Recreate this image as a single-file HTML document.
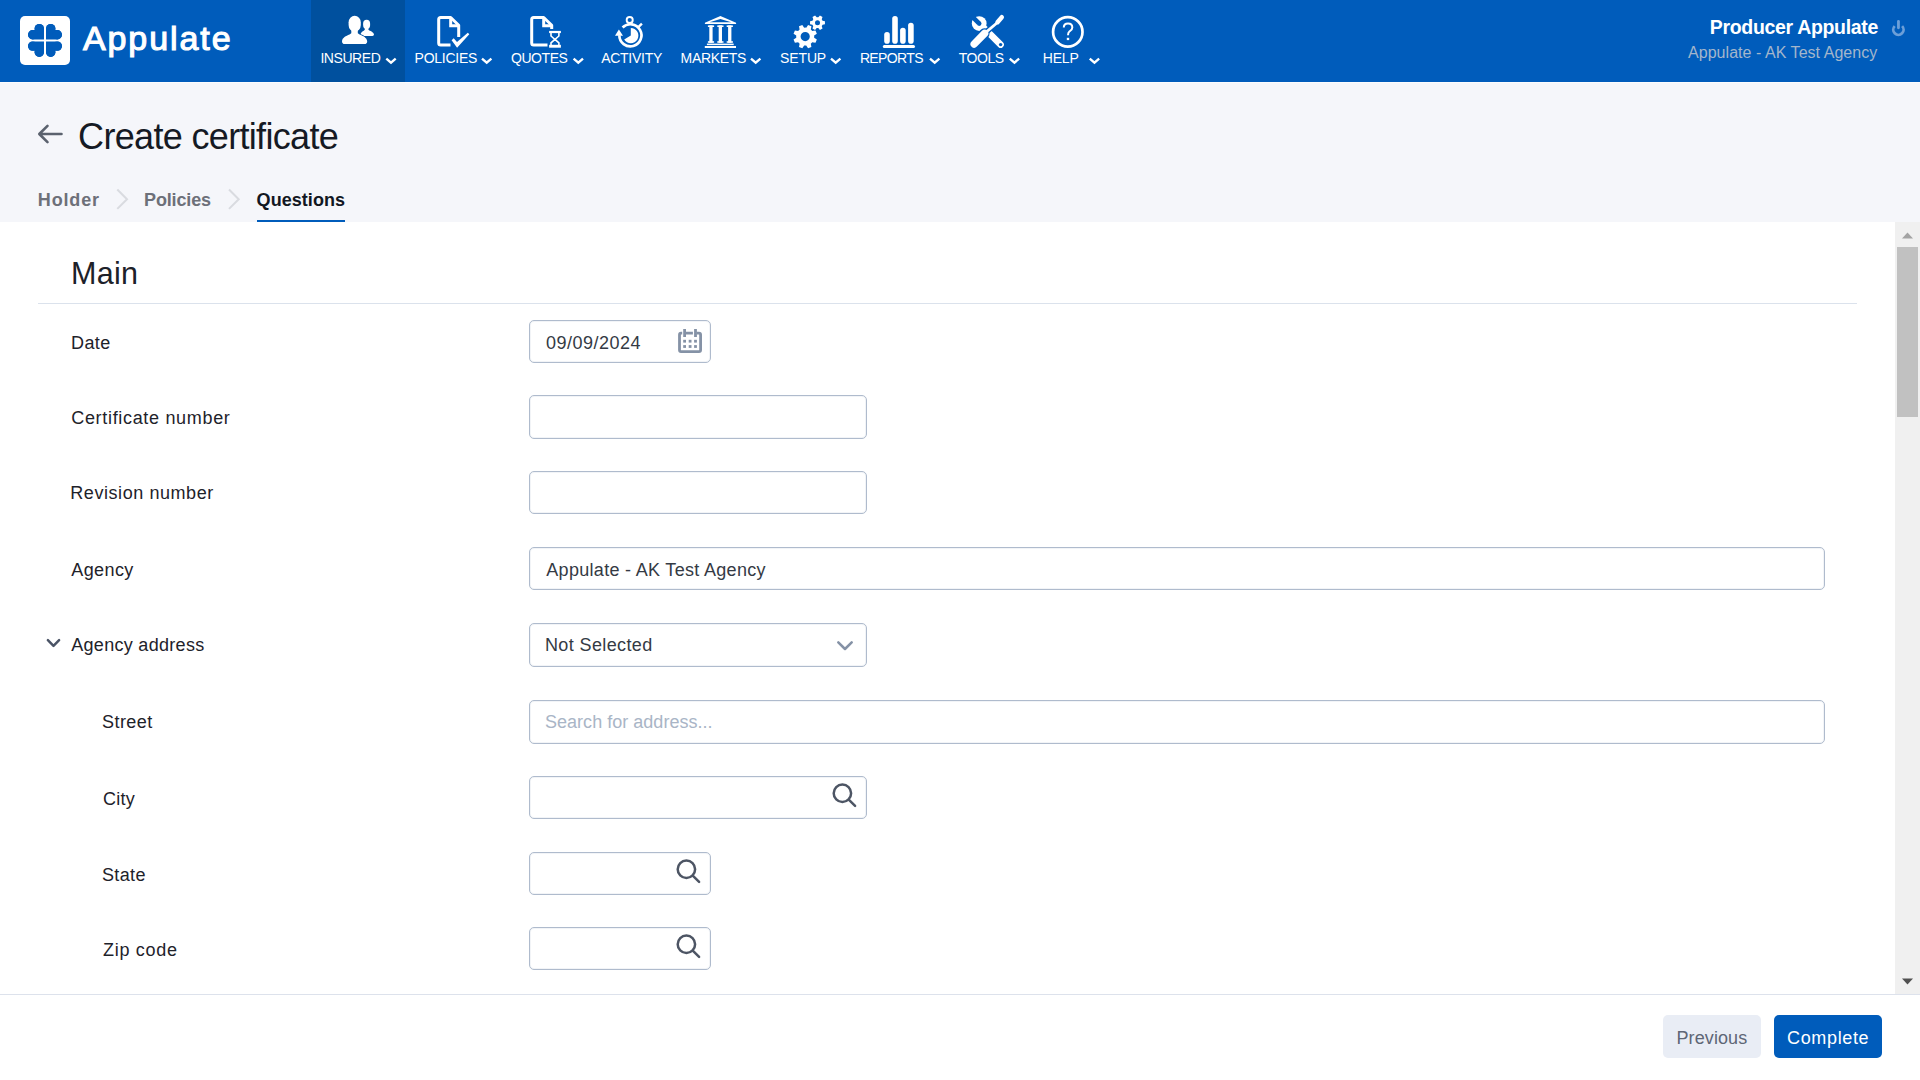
<!DOCTYPE html>
<html><head><meta charset="utf-8">
<style>
*{box-sizing:border-box;margin:0;padding:0}
html,body{width:1920px;height:1080px;overflow:hidden;background:#f5f6fa;font-family:"Liberation Sans",sans-serif}
.a{position:absolute;white-space:nowrap;line-height:1}
svg{position:absolute;left:0;top:0}
</style></head><body>
<div style="position:absolute;left:0;top:0;width:1920px;height:82px;background:#005cbb"></div>
<div style="position:absolute;left:311px;top:0;width:94px;height:82px;background:#00509e"></div>
<div style="position:absolute;left:0;top:82px;width:1920px;height:1px;background:#fbfcfe"></div>
<div style="position:absolute;left:20px;top:16px;width:50px;height:49px;background:#fff;border-radius:5px"></div>
<svg width="1920" height="82" viewBox="0 0 1920 82"><g fill="#005cbb"><g><path d="M44,39.4 H32.7 A4.7,4.7 0 0 1 32.7,30 L34.6,30 V28.6 A4.7,4.7 0 0 1 44,28.6 Z"/><circle cx="32.7" cy="34.7" r="4.7"/><circle cx="39.3" cy="28.6" r="4.7"/></g><g transform="translate(90,0) scale(-1,1)"><path d="M44,39.4 H32.7 A4.7,4.7 0 0 1 32.7,30 L34.6,30 V28.6 A4.7,4.7 0 0 1 44,28.6 Z"/><circle cx="32.7" cy="34.7" r="4.7"/><circle cx="39.3" cy="28.6" r="4.7"/></g><g transform="translate(0,80.8) scale(1,-1)"><path d="M44,39.4 H32.7 A4.7,4.7 0 0 1 32.7,30 L34.6,30 V28.6 A4.7,4.7 0 0 1 44,28.6 Z"/><circle cx="32.7" cy="34.7" r="4.7"/><circle cx="39.3" cy="28.6" r="4.7"/></g><g transform="translate(90,80.8) scale(-1,-1)"><path d="M44,39.4 H32.7 A4.7,4.7 0 0 1 32.7,30 L34.6,30 V28.6 A4.7,4.7 0 0 1 44,28.6 Z"/><circle cx="32.7" cy="34.7" r="4.7"/><circle cx="39.3" cy="28.6" r="4.7"/></g></g><g fill="#fff"><rect x="363.1" y="19.8" width="7" height="9.2" rx="3.5" ry="3.9"/><rect x="364.8" y="27" width="3.6" height="4"/><path d="M360.5,34.3 C361,32 363.5,31 365,29.8 L368.3,29.8 C370,31 373.5,32 374,34.3 Q374,35.9 372.4,35.9 L362,35.9 Q360.5,35.9 360.5,34.3Z"/></g><g fill="#fff" stroke="#00509e" stroke-width="1.6"><path d="M342,41.2 C342.3,37.8 346,36 349.5,34.6 L351.3,33.2 L357.8,33.2 L359.6,34.6 C363.2,36 366.8,37.8 367.2,41.2 Q367.2,44 364.4,44 L344.8,44 Q342,44 342,41.2Z"/><rect x="348.6" y="15.7" width="12.2" height="16" rx="6.1" ry="6.6"/></g><g fill="#fff"><path d="M342,41.2 C342.3,37.8 346,36 349.5,34.6 L351.3,33.2 L357.8,33.2 L359.6,34.6 C363.2,36 366.8,37.8 367.2,41.2 Q367.2,44 364.4,44 L344.8,44 Q342,44 342,41.2Z"/><rect x="348.6" y="15.7" width="12.2" height="16" rx="6.1" ry="6.6"/><rect x="351.3" y="30" width="6.5" height="5"/></g><path d="M450.5,45.1 H440.7 Q438.7,45.1 438.7,43.1 V19.5 Q438.7,17.5 440.7,17.5 H450.7 L458.7,25.3 V37" fill="none" stroke="#fff" stroke-width="3" stroke-linejoin="round"/><path d="M450.7,17.5 V25.8 H458.7" fill="none" stroke="#fff" stroke-width="3"/><path d="M451.6,40.2 L453.7,38.2 L457,42 L467.8,32.8 L469.3,34.3 L457.1,47.8 Z" fill="#fff"/><path d="M547.5,45.1 H533.7 Q531.7,45.1 531.7,43.1 V19.5 Q531.7,17.5 533.7,17.5 H543.7 L551.7,25.3 V29" fill="none" stroke="#fff" stroke-width="3" stroke-linejoin="round"/><path d="M543.7,17.5 V25.8 H551.7" fill="none" stroke="#fff" stroke-width="3"/><g fill="#fff"><rect x="549.1" y="30.9" width="11.8" height="2.2"/><rect x="549.1" y="44.8" width="11.8" height="2.9"/></g><path d="M551,33 V36 L554.9,39.4 L551,42.8 V45 M558.9,33 V36 L555,39.4 L558.9,42.8 V45" fill="none" stroke="#fff" stroke-width="1.6"/><g fill="none" stroke="#fff"><path d="M619.35,35.3 A11.05,11.05 0 1 0 622.6,27.5" stroke-width="2.7"/><circle cx="629.7" cy="20" r="3.05" stroke-width="1.9"/><path d="M638.6,26.9 L641.9,23.6" stroke-width="2.4"/></g><path d="M615,35.8 L618.9,29.4 L623,35.8 Z" fill="#fff"/><path d="M630.8,35.6 V28 A7.6,7.6 0 1 1 624.2,39.4 Z" fill="#fff"/><g fill="#fff"><path d="M720.4,15.9 L736.1,22.7 V24.1 H704.9 V22.7 Z M720.4,19 L709.6,22.3 H731.2 Z" fill-rule="evenodd"/><rect x="707.9" y="25.4" width="6.2" height="1.6"/><rect x="709.3" y="25.4" width="3.3" height="17.4"/><rect x="707.9" y="41.2" width="6.2" height="1.6"/><rect x="717.3" y="25.4" width="6.2" height="1.6"/><rect x="718.7" y="25.4" width="3.3" height="17.4"/><rect x="717.3" y="41.2" width="6.2" height="1.6"/><rect x="726.7" y="25.4" width="6.2" height="1.6"/><rect x="728.1" y="25.4" width="3.3" height="17.4"/><rect x="726.7" y="41.2" width="6.2" height="1.6"/><rect x="706.9" y="43.6" width="26.8" height="1.5"/><rect x="704.8" y="46" width="31.2" height="2"/></g><path d="M814.14,37.63 L816.85,39.48 L815.48,42.80 L812.25,42.19 A9.0,9.0 0 0 1 810.79,43.65 L810.79,43.65 L811.40,46.88 L808.08,48.25 L806.23,45.54 A9.0,9.0 0 0 1 804.17,45.54 L804.17,45.54 L802.32,48.25 L799.00,46.88 L799.61,43.65 A9.0,9.0 0 0 1 798.15,42.19 L798.15,42.19 L794.92,42.80 L793.55,39.48 L796.26,37.63 A9.0,9.0 0 0 1 796.26,35.57 L796.26,35.57 L793.55,33.72 L794.92,30.40 L798.15,31.01 A9.0,9.0 0 0 1 799.61,29.55 L799.61,29.55 L799.00,26.32 L802.32,24.95 L804.17,27.66 A9.0,9.0 0 0 1 806.23,27.66 L806.23,27.66 L808.08,24.95 L811.40,26.32 L810.79,29.55 A9.0,9.0 0 0 1 812.25,31.01 L812.25,31.01 L815.48,30.40 L816.85,33.72 L814.14,35.57 A9.0,9.0 0 0 1 814.14,37.63Z M809.80,36.60 A4.6,4.6 0 1 0 800.60,36.60 A4.6,4.6 0 1 0 809.80,36.60Z" fill="#fff" fill-rule="evenodd"/><path d="M822.53,20.75 L824.95,21.21 L824.95,24.19 L822.53,24.65 A5.4,5.4 0 0 1 821.71,26.08 L821.71,26.08 L822.52,28.41 L819.94,29.90 L818.32,28.04 A5.4,5.4 0 0 1 816.68,28.04 L816.68,28.04 L815.06,29.90 L812.48,28.41 L813.29,26.08 A5.4,5.4 0 0 1 812.47,24.65 L812.47,24.65 L810.05,24.19 L810.05,21.21 L812.47,20.75 A5.4,5.4 0 0 1 813.29,19.32 L813.29,19.32 L812.48,16.99 L815.06,15.50 L816.68,17.36 A5.4,5.4 0 0 1 818.32,17.36 L818.32,17.36 L819.94,15.50 L822.52,16.99 L821.71,19.32 A5.4,5.4 0 0 1 822.53,20.75Z M820.00,22.70 A2.5,2.5 0 1 0 815.00,22.70 A2.5,2.5 0 1 0 820.00,22.70Z" fill="#fff" fill-rule="evenodd"/><g fill="#fff"><rect x="884.2" y="32" width="5.6" height="11.7" rx="2.8"/><rect x="892.2" y="16" width="5.6" height="27.7" rx="2.8"/><rect x="900.1" y="27.8" width="5.6" height="15.9" rx="2.8"/><rect x="908.1" y="22.7" width="5.6" height="21" rx="2.8"/><rect x="882.8" y="44.9" width="32.2" height="3.1" rx="1.5"/></g><g stroke-linecap="round"><path d="M982,26 L1000.6,44.6" stroke="#fff" stroke-width="6.6"/><circle cx="979.2" cy="23.6" r="7.4" fill="#fff"/><g transform="rotate(-45 979.2 23.6)"><rect x="976.9" y="12" width="4.6" height="11" fill="#005cbb"/></g><circle cx="979.2" cy="23.6" r="2.3" fill="#005cbb"/><circle cx="1000.6" cy="44.6" r="1.7" fill="#005cbb"/><path d="M1001.8,17.2 L997,22.8 M997.5,22.5 L984.3,33.6" stroke="#005cbb" stroke-width="5.6"/><path d="M984.3,33.6 L974.2,44" stroke="#005cbb" stroke-width="10.5"/><path d="M1001.8,17.2 L997.5,22.2" stroke="#fff" stroke-width="4.4"/><path d="M997.5,22.5 L984.3,33.6" stroke="#fff" stroke-width="2.8" stroke-linecap="butt"/><path d="M984.6,33.3 L974.2,44" stroke="#fff" stroke-width="7.4"/></g><circle cx="1067.8" cy="31.9" r="14.7" fill="none" stroke="#fff" stroke-width="2.7"/><path d="M1063.8,27.6 C1063.8,25 1065.6,23.6 1068,23.6 C1070.5,23.6 1072.3,25.2 1072.3,27.4 C1072.3,29.6 1070.8,30.4 1069.6,31.3 C1068.4,32.2 1068,33.2 1068,35.2" fill="none" stroke="#fff" stroke-width="2"/><rect x="1066.8" y="37.8" width="2.4" height="2.3" fill="#fff"/><path d="M386.30,58.7 L391.00,62.6 L395.70,58.7" fill="none" stroke="#fff" stroke-width="2.4"/><path d="M482.00,58.7 L486.70,62.6 L491.40,58.7" fill="none" stroke="#fff" stroke-width="2.4"/><path d="M573.60,58.7 L578.30,62.6 L583.00,58.7" fill="none" stroke="#fff" stroke-width="2.4"/><path d="M751.00,58.7 L755.70,62.6 L760.40,58.7" fill="none" stroke="#fff" stroke-width="2.4"/><path d="M831.00,58.7 L835.70,62.6 L840.40,58.7" fill="none" stroke="#fff" stroke-width="2.4"/><path d="M930.00,58.7 L934.70,62.6 L939.40,58.7" fill="none" stroke="#fff" stroke-width="2.4"/><path d="M1009.75,58.7 L1014.45,62.6 L1019.15,58.7" fill="none" stroke="#fff" stroke-width="2.4"/><path d="M1089.75,58.7 L1094.45,62.6 L1099.15,58.7" fill="none" stroke="#fff" stroke-width="2.4"/><g fill="none" stroke="#6c9fd8" stroke-width="2.8"><path d="M1894.70,26.12 A5.15,5.15 0 1 0 1902.10,26.12"/><path d="M1898.45,21.3 V27.8" stroke-linecap="round"/></g></svg>
<div class="a " style="left:82.90px;top:21.22px;font-size:34px;color:#fff;letter-spacing:1.929px;-webkit-text-stroke:1.1px #fff;">Appulate</div>
<div class="a " style="left:320.40px;top:51.15px;font-size:14px;color:#fff;letter-spacing:-0.431px;">INSURED</div>
<div class="a " style="left:414.60px;top:51.15px;font-size:14px;color:#fff;letter-spacing:-0.264px;">POLICIES</div>
<div class="a " style="left:511.00px;top:51.15px;font-size:14px;color:#fff;letter-spacing:-0.438px;">QUOTES</div>
<div class="a " style="left:601.20px;top:51.15px;font-size:14px;color:#fff;letter-spacing:-0.273px;">ACTIVITY</div>
<div class="a " style="left:680.60px;top:51.15px;font-size:14px;color:#fff;letter-spacing:-0.313px;">MARKETS</div>
<div class="a " style="left:780.00px;top:51.15px;font-size:14px;color:#fff;letter-spacing:-0.117px;">SETUP</div>
<div class="a " style="left:859.90px;top:51.15px;font-size:14px;color:#fff;letter-spacing:-0.634px;">REPORTS</div>
<div class="a " style="left:958.75px;top:51.15px;font-size:14px;color:#fff;letter-spacing:-0.441px;">TOOLS</div>
<div class="a " style="left:1042.75px;top:51.15px;font-size:14px;color:#fff;letter-spacing:-0.186px;">HELP</div>
<div class="a " style="left:1709.80px;top:17.99px;font-size:19.5px;color:#fff;font-weight:bold;letter-spacing:-0.325px;">Producer Appulate</div>
<div class="a " style="left:1688.00px;top:45.36px;font-size:16px;color:#a3b6cb;letter-spacing:0.042px;">Appulate - AK Test Agency</div>
<svg width="80" height="160" viewBox="0 0 80 160"><path d="M61.5,134 H40 M47.5,125.8 L39.3,134 L47.5,142.2" fill="none" stroke="#5b626e" stroke-width="2.6" stroke-linecap="round" stroke-linejoin="round"/></svg>
<div class="a " style="left:78.10px;top:119.13px;font-size:36px;color:#151a24;letter-spacing:-0.671px;">Create certificate</div>
<div class="a " style="left:37.80px;top:190.86px;font-size:18px;color:#6d7079;font-weight:bold;letter-spacing:0.860px;">Holder</div>
<div class="a " style="left:144.00px;top:190.86px;font-size:18px;color:#6d7079;font-weight:bold;letter-spacing:-0.129px;">Policies</div>
<div class="a " style="left:256.60px;top:190.86px;font-size:18px;color:#121722;font-weight:bold;letter-spacing:0.050px;">Questions</div>
<svg width="260" height="222" viewBox="0 0 260 222"><path d="M117.3,189.5 L127,199.2 L117.3,208.9 M229,189.5 L238.7,199.2 L229,208.9" fill="none" stroke="#d9dbe0" stroke-width="2"/></svg>
<div style="position:absolute;left:257px;top:220px;width:88px;height:2px;background:#005cbb"></div>
<div style="position:absolute;left:0;top:222px;width:1895px;height:772px;background:#fff"></div>
<div style="position:absolute;left:1895px;top:222px;width:25px;height:772px;background:#f0f0f0"></div>
<div style="position:absolute;left:1897px;top:247px;width:21px;height:170px;background:#c1c1c1"></div>
<svg width="1920" height="1000" viewBox="0 0 1920 1000"><path d="M1902,238.5 L1907.5,232.5 L1913,238.5Z" fill="#a3a3a3"/><path d="M1902,978.5 L1907.5,984.5 L1913,978.5Z" fill="#505050"/></svg>
<div class="a " style="left:71.10px;top:258.08px;font-size:30.5px;color:#1d2129;letter-spacing:0.267px;">Main</div>
<div style="position:absolute;left:38px;top:303px;width:1819px;height:1px;background:#dbe2ec"></div>
<div style="position:absolute;left:0;top:994px;width:1920px;height:86px;background:#fff;border-top:1px solid #dde2ec"></div>
<div class="a " style="left:71.10px;top:333.66px;font-size:18px;color:#1e222a;letter-spacing:0.359px;">Date</div>
<div style="position:absolute;left:529px;top:320px;width:182px;height:43px;border:1px solid #afbbcd;border-radius:5px;background:#fff;box-shadow:inset 0 0 0 1px rgba(176,188,206,0.16)"></div>
<div class="a " style="left:546.00px;top:333.66px;font-size:18px;color:#343a44;letter-spacing:0.504px;">09/09/2024</div>
<svg width="720" height="370" viewBox="0 0 720 370"><g fill="none" stroke="#8592a6" stroke-width="2.8"><path d="M682.2,333.2 H681 Q679.5,333.2 679.5,334.7 V350.1 Q679.5,351.6 681,351.6 H699 Q700.6,351.6 700.6,350.1 V334.7 Q700.6,333.2 699,333.2 H696.5 M685.5,333.2 H692.9"/><path d="M684.6,329 V336.9 M695.5,329 V336.9"/></g><g fill="#8592a6"><rect x="683.2" y="339.8" width="2.8" height="2.8"/><rect x="688.7" y="339.8" width="2.8" height="2.8"/><rect x="694.1" y="339.8" width="2.8" height="2.8"/><rect x="683.2" y="345.1" width="2.8" height="2.8"/><rect x="688.7" y="345.1" width="2.8" height="2.8"/><rect x="694.1" y="345.1" width="2.8" height="2.8"/></g></svg>
<div class="a " style="left:71.25px;top:408.56px;font-size:18px;color:#1e222a;letter-spacing:0.677px;">Certificate number</div>
<div style="position:absolute;left:529px;top:395px;width:338px;height:44px;border:1px solid #afbbcd;border-radius:5px;background:#fff;box-shadow:inset 0 0 0 1px rgba(176,188,206,0.16)"></div>
<div class="a " style="left:70.25px;top:484.46px;font-size:18px;color:#1e222a;letter-spacing:0.567px;">Revision number</div>
<div style="position:absolute;left:529px;top:471px;width:338px;height:43px;border:1px solid #afbbcd;border-radius:5px;background:#fff;box-shadow:inset 0 0 0 1px rgba(176,188,206,0.16)"></div>
<div class="a " style="left:71.25px;top:560.76px;font-size:18px;color:#1e222a;letter-spacing:0.409px;">Agency</div>
<div style="position:absolute;left:529px;top:547px;width:1296px;height:43px;border:1px solid #afbbcd;border-radius:5px;background:#fff;box-shadow:inset 0 0 0 1px rgba(176,188,206,0.16)"></div>
<div class="a " style="left:546.25px;top:560.76px;font-size:18px;color:#343a44;letter-spacing:0.311px;">Appulate - AK Test Agency</div>
<div class="a " style="left:71.25px;top:635.66px;font-size:18px;color:#1e222a;letter-spacing:0.298px;">Agency address</div>
<div style="position:absolute;left:529px;top:623px;width:338px;height:44px;border:1px solid #afbbcd;border-radius:5px;background:#fff;box-shadow:inset 0 0 0 1px rgba(176,188,206,0.16)"></div>
<div class="a " style="left:545.00px;top:635.66px;font-size:18px;color:#343a44;letter-spacing:0.374px;">Not Selected</div>
<svg width="900" height="700" viewBox="0 0 900 700"><path d="M838.3,642.3 L845,649 L851.7,642.3" fill="none" stroke="#8592a6" stroke-width="2.5" stroke-linecap="round" stroke-linejoin="round"/><path d="M47.9,640.2 L53.5,645.8 L59.1,640.2" fill="none" stroke="#4b5466" stroke-width="2.5" stroke-linecap="round" stroke-linejoin="round"/></svg>
<div class="a " style="left:102.00px;top:713.46px;font-size:18px;color:#1e222a;letter-spacing:0.445px;">Street</div>
<div style="position:absolute;left:529px;top:700px;width:1296px;height:44px;border:1px solid #afbbcd;border-radius:5px;background:#fff;box-shadow:inset 0 0 0 1px rgba(176,188,206,0.16)"></div>
<div class="a " style="left:545.00px;top:713.46px;font-size:18px;color:#a9b5c6;letter-spacing:0.022px;">Search for address...</div>
<div class="a " style="left:103.00px;top:789.76px;font-size:18px;color:#1e222a;letter-spacing:0.250px;">City</div>
<div style="position:absolute;left:529px;top:776px;width:338px;height:43px;border:1px solid #afbbcd;border-radius:5px;background:#fff;box-shadow:inset 0 0 0 1px rgba(176,188,206,0.16)"></div>
<svg width="900" height="1000" viewBox="0 0 900 1000"><g fill="none" stroke="#4d5564" stroke-width="2.5" stroke-linecap="round"><circle cx="842.40" cy="793.20" r="8.7"/><path d="M849.00,799.80 L855.10,805.90"/></g></svg>
<div class="a " style="left:102.00px;top:865.66px;font-size:18px;color:#1e222a;letter-spacing:0.344px;">State</div>
<div style="position:absolute;left:529px;top:852px;width:182px;height:43px;border:1px solid #afbbcd;border-radius:5px;background:#fff;box-shadow:inset 0 0 0 1px rgba(176,188,206,0.16)"></div>
<svg width="900" height="1000" viewBox="0 0 900 1000"><g fill="none" stroke="#4d5564" stroke-width="2.5" stroke-linecap="round"><circle cx="686.40" cy="869.20" r="8.7"/><path d="M693.00,875.80 L699.10,881.90"/></g></svg>
<div class="a " style="left:103.00px;top:940.56px;font-size:18px;color:#1e222a;letter-spacing:0.699px;">Zip code</div>
<div style="position:absolute;left:529px;top:927px;width:182px;height:43px;border:1px solid #afbbcd;border-radius:5px;background:#fff;box-shadow:inset 0 0 0 1px rgba(176,188,206,0.16)"></div>
<svg width="900" height="1000" viewBox="0 0 900 1000"><g fill="none" stroke="#4d5564" stroke-width="2.5" stroke-linecap="round"><circle cx="686.40" cy="944.20" r="8.7"/><path d="M693.00,950.80 L699.10,956.90"/></g></svg>
<div style="position:absolute;left:1663px;top:1015px;width:98px;height:43px;background:#e9edf5;border-radius:5px"></div>
<div style="position:absolute;left:1774px;top:1015px;width:108px;height:43px;background:#005cbb;border-radius:5px"></div>
<div class="a " style="left:1676.50px;top:1028.56px;font-size:18px;color:#5e6675;letter-spacing:0.096px;">Previous</div>
<div class="a " style="left:1787.00px;top:1028.56px;font-size:18px;color:#fff;letter-spacing:0.655px;">Complete</div>
</body></html>
